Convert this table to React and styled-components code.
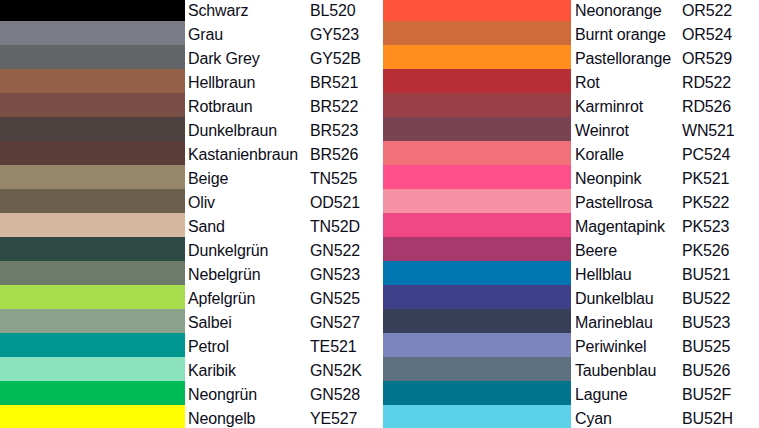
import React from "react"
import styled, { createGlobalStyle } from "styled-components"

const GlobalStyle = createGlobalStyle`
  html, body {
    margin: 0;
    padding: 0;
    background: #ffffff;
  }
  body {
    font-family: "Liberation Sans", Arial, sans-serif;
  }
`

const left = [
  ["Schwarz", "BL520", "#000000"],
  ["Grau", "GY523", "#797b87"],
  ["Dark Grey", "GY52B", "#626567"],
  ["Hellbraun", "BR521", "#955f48"],
  ["Rotbraun", "BR522", "#784e45"],
  ["Dunkelbraun", "BR523", "#4d4140"],
  ["Kastanienbraun", "BR526", "#5a3c39"],
  ["Beige", "TN525", "#97876a"],
  ["Oliv", "OD521", "#6b604c"],
  ["Sand", "TN52D", "#d6b7a0"],
  ["Dunkelgrün", "GN522", "#2e4a45"],
  ["Nebelgrün", "GN523", "#6e7b6a"],
  ["Apfelgrün", "GN525", "#a8de4e"],
  ["Salbei", "GN527", "#8aa289"],
  ["Petrol", "TE521", "#009790"],
  ["Karibik", "GN52K", "#8ae3bd"],
  ["Neongrün", "GN528", "#00bc56"],
  ["Neongelb", "YE527", "#ffff00"],
]

const right = [
  ["Neonorange", "OR522", "#ff543b"],
  ["Burnt orange", "OR524", "#cf6b3a"],
  ["Pastellorange", "OR529", "#ff8e1f"],
  ["Rot", "RD522", "#b72e37"],
  ["Karminrot", "RD526", "#9b3f46"],
  ["Weinrot", "WN521", "#7a4352"],
  ["Koralle", "PC524", "#f1717a"],
  ["Neonpink", "PK521", "#ff4f8b"],
  ["Pastellrosa", "PK522", "#f492a4"],
  ["Magentapink", "PK523", "#ef4882"],
  ["Beere", "PK526", "#a8396c"],
  ["Hellblau", "BU521", "#0075b0"],
  ["Dunkelblau", "BU522", "#3e408a"],
  ["Marineblau", "BU523", "#383f58"],
  ["Periwinkel", "BU525", "#7c85bd"],
  ["Taubenblau", "BU526", "#5e7180"],
  ["Lagune", "BU52F", "#00758d"],
  ["Cyan", "BU52H", "#5cd1ea"],
]

const Sheet = styled.div`
  display: flex;
  width: 759px;
  height: 428px;
  overflow: hidden;
  background: #ffffff;
`

const Column = styled.div`
  display: grid;
  grid-template-columns: ${p => p.cols};
  grid-auto-rows: 24px;
  margin-top: -3px;
  width: ${p => p.width}px;
  flex: none;
`

const Swatch = styled.div`
  background: ${p => p.color};
`

const Cell = styled.div`
  box-sizing: border-box;
  padding: 4px 0 0 ${p => p.pad}px;
  font-size: 16px;
  line-height: 20px;
  color: #0d0d1a;
  white-space: nowrap;
  letter-spacing: -0.15px;
`

function ColorList({ items, cols, width, namePad, codePad }) {
  return (
    <Column cols={cols} width={width}>
      {items.map(([name, code, color]) => (
        <React.Fragment key={code}>
          <Swatch color={color} />
          <Cell pad={namePad}>{name}</Cell>
          <Cell pad={codePad}>{code}</Cell>
        </React.Fragment>
      ))}
    </Column>
  )
}

export default function App() {
  return (
    <>
      <GlobalStyle />
      <Sheet>
        <ColorList items={left} cols="185px 122px 76px" width={383} namePad={3} codePad={3} />
        <ColorList items={right} cols="188px 108px 80px" width={376} namePad={4} codePad={3} />
      </Sheet>
    </>
  )
}
